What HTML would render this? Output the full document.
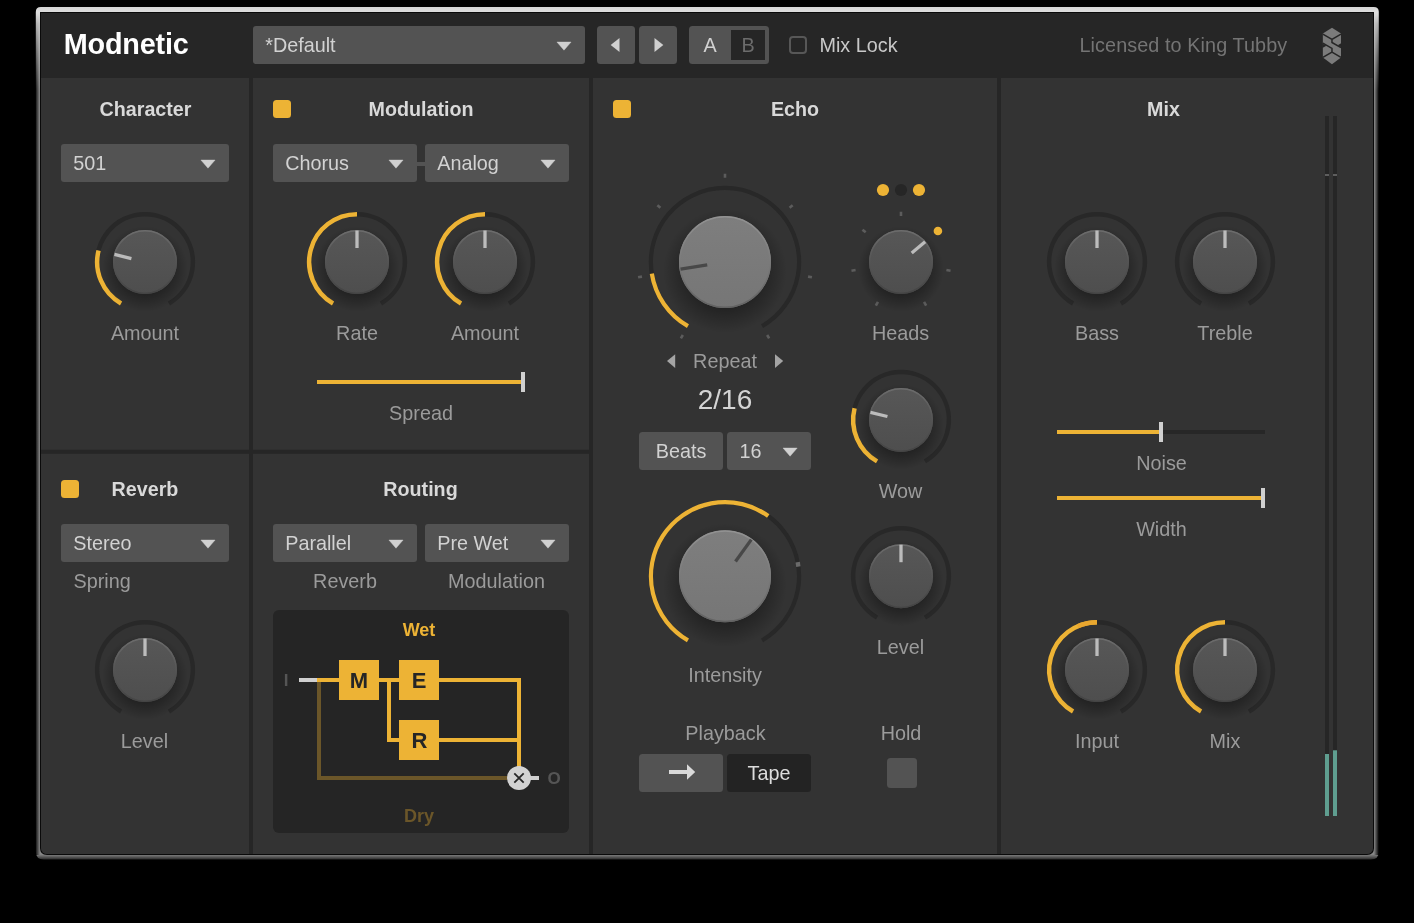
<!DOCTYPE html>
<html><head><meta charset="utf-8"><title>Modnetic</title>
<style>
html,body{margin:0;padding:0;background:#000;}
body{width:1414px;height:923px;position:relative;overflow:hidden;font-family:"Liberation Sans",sans-serif;}
#inner{position:absolute;left:41px;top:13px;width:1332px;height:841px;background:#262626;border-radius:0 0 6px 6px;overflow:hidden;}
svg{position:absolute;left:0;top:0;}
.t{position:absolute;white-space:nowrap;}
</style></head><body>
<svg width="1414" height="923" viewBox="0 0 1414 923">
<defs>
<linearGradient id="fv" x1="0" y1="7" x2="0" y2="859.5" gradientUnits="userSpaceOnUse">
<stop offset="0" stop-color="#d4d4d4"/><stop offset="0.006" stop-color="#dedede"/><stop offset="0.02" stop-color="#c4c4c4"/><stop offset="0.1" stop-color="#8e8e8e"/><stop offset="0.994" stop-color="#868686"/><stop offset="1" stop-color="#2a2a2a"/>
</linearGradient>
<linearGradient id="hl" x1="35" y1="0" x2="40" y2="0" gradientUnits="userSpaceOnUse"><stop offset="0" stop-color="#000" stop-opacity="1"/><stop offset="1" stop-color="#000" stop-opacity="0"/></linearGradient>
<linearGradient id="hr" x1="1379" y1="0" x2="1374" y2="0" gradientUnits="userSpaceOnUse"><stop offset="0" stop-color="#000" stop-opacity="1"/><stop offset="1" stop-color="#000" stop-opacity="0"/></linearGradient>
<linearGradient id="vf" x1="0" y1="14" x2="0" y2="90" gradientUnits="userSpaceOnUse"><stop offset="0" stop-color="#000"/><stop offset="1" stop-color="#fff"/></linearGradient>
<mask id="vm" maskUnits="userSpaceOnUse" x="0" y="0" width="1414" height="923"><rect x="0" y="0" width="1414" height="923" fill="url(#vf)"/></mask>
</defs>
<path d="M40.8 7H1373.8Q1378.8 7 1378.8 12V851.5Q1378.8 859.5 1370.8 859.5H43.8Q35.8 859.5 35.8 851.5V12Q35.8 7 40.8 7Z" fill="url(#fv)"/>
<rect x="35" y="12" width="5" height="843" fill="url(#hl)" mask="url(#vm)"/>
<rect x="1374" y="12" width="5.5" height="843" fill="url(#hr)" mask="url(#vm)"/>
<path d="M40 12H1374V848Q1374 855 1367 855H47Q40 855 40 848Z" fill="#0a0a0a"/>
</svg>
<div id="inner">
<svg width="1414" height="923" viewBox="41 13 1414 923" style="left:0;top:0">
<defs>
<linearGradient id="gs" x1="0" y1="0" x2="0" y2="1"><stop offset="0" stop-color="#575757"/><stop offset="1" stop-color="#4e4e4e"/></linearGradient>
<linearGradient id="gb" x1="0" y1="0" x2="0" y2="1"><stop offset="0" stop-color="#7e7e7e"/><stop offset="1" stop-color="#767676"/></linearGradient>
<linearGradient id="es" x1="0" y1="0" x2="0" y2="1"><stop offset="0" stop-color="#6c6c6c"/><stop offset="0.5" stop-color="#545454"/><stop offset="1" stop-color="#444444"/></linearGradient>
<linearGradient id="eb" x1="0" y1="0" x2="0" y2="1"><stop offset="0" stop-color="#929292"/><stop offset="0.5" stop-color="#7a7a7a"/><stop offset="1" stop-color="#626262"/></linearGradient>
<radialGradient id="ss"><stop offset="0.6" stop-color="#000" stop-opacity="0.32"/><stop offset="1" stop-color="#000" stop-opacity="0"/></radialGradient>
<radialGradient id="sb"><stop offset="0.6" stop-color="#000" stop-opacity="0.32"/><stop offset="1" stop-color="#000" stop-opacity="0"/></radialGradient>
</defs>
<rect x="40" y="12" width="1334" height="66" rx="0" fill="#262626"/>
<rect x="40" y="78" width="1334" height="776" rx="0" fill="#262626"/>
<rect x="41" y="78" width="208" height="371.75" rx="0" fill="#333333"/>
<rect x="253" y="78" width="336" height="371.75" rx="0" fill="#333333"/>
<rect x="41" y="453.75" width="208" height="400.25" rx="0" fill="#333333"/>
<rect x="253" y="453.75" width="336" height="400.25" rx="0" fill="#333333"/>
<rect x="593" y="78" width="404" height="776" rx="0" fill="#333333"/>
<rect x="1001" y="78" width="372" height="776" rx="0" fill="#333333"/>
<rect x="253" y="26" width="332" height="38" rx="3" fill="#535353"/>
<path d="M556.9 42.0L571.1 42.0L564 50.2Z" fill="#d0d0d0" stroke="#d0d0d0" stroke-width="0.4" stroke-linejoin="round"/>
<rect x="597" y="26" width="38" height="38" rx="3.5" fill="#535353"/>
<rect x="639" y="26" width="38" height="38" rx="3.5" fill="#535353"/>
<path d="M619.5 38L619.5 52L610.7 45Z" fill="#d0d0d0"/>
<path d="M654.5 38L654.5 52L663.3 45Z" fill="#d0d0d0"/>
<rect x="689" y="26" width="80" height="38" rx="3.5" fill="#535353"/>
<rect x="731" y="30" width="34" height="30" rx="0" fill="#262626"/>
<rect x="790" y="37" width="16" height="16" rx="3" fill="none" stroke="#575757" stroke-width="2"/>
<g transform="translate(1310,20) scale(0.05634)">
<path d="M390 138L550 240L550 665L390 785L228 665L228 240Z" fill="#7b7b7b"/>
<path d="M228 252L390 345L550 252M390 345L390 400L550 490M228 410L390 505L390 570M228 665L390 570L550 665" fill="none" stroke="#262626" stroke-width="27"/>
<path d="M560 408L492 447L560 486Z" fill="#262626"/>
<path d="M218 418L292 458L218 498Z" fill="#262626"/>
</g>
<rect x="61" y="144" width="168" height="38" rx="3" fill="#535353"/>
<path d="M200.9 160.0L215.1 160.0L208 168.2Z" fill="#d0d0d0" stroke="#d0d0d0" stroke-width="0.4" stroke-linejoin="round"/>
<path d="M121.08 303.44A47.85 47.85 0 1 1 168.93 303.44" fill="none" stroke="#282828" stroke-width="4.5"/>
<path d="M121.08 303.44A47.85 47.85 0 0 1 98.57 250.42" fill="none" stroke="#EDB335" stroke-width="4.5"/>
<circle cx="145" cy="269" r="43" fill="url(#ss)"/>
<circle cx="145" cy="262" r="32" fill="url(#gs)"/>
<circle cx="145" cy="262" r="31.25" fill="none" stroke="url(#es)" stroke-width="1.5"/>
<line x1="131.42" y1="258.61" x2="114.44" y2="254.38" stroke="#bcbcbc" stroke-width="3.3"/>
<rect x="273" y="100" width="18" height="18" rx="3.5" fill="#EDB335"/>
<rect x="415" y="162" width="12" height="4" rx="0" fill="#535353"/>
<rect x="273" y="144" width="144" height="38" rx="3" fill="#535353"/>
<path d="M388.9 160.0L403.1 160.0L396 168.2Z" fill="#d0d0d0" stroke="#d0d0d0" stroke-width="0.4" stroke-linejoin="round"/>
<rect x="425" y="144" width="144" height="38" rx="3" fill="#535353"/>
<path d="M540.9 160.0L555.1 160.0L548 168.2Z" fill="#d0d0d0" stroke="#d0d0d0" stroke-width="0.4" stroke-linejoin="round"/>
<path d="M333.07 303.44A47.85 47.85 0 1 1 380.93 303.44" fill="none" stroke="#282828" stroke-width="4.5"/>
<path d="M333.07 303.44A47.85 47.85 0 0 1 357.00 214.15" fill="none" stroke="#EDB335" stroke-width="4.5"/>
<circle cx="357" cy="269" r="43" fill="url(#ss)"/>
<circle cx="357" cy="262" r="32" fill="url(#gs)"/>
<circle cx="357" cy="262" r="31.25" fill="none" stroke="url(#es)" stroke-width="1.5"/>
<line x1="357.00" y1="248.00" x2="357.00" y2="230.50" stroke="#bcbcbc" stroke-width="3.3"/>
<path d="M461.07 303.44A47.85 47.85 0 1 1 508.93 303.44" fill="none" stroke="#282828" stroke-width="4.5"/>
<path d="M461.07 303.44A47.85 47.85 0 0 1 485.00 214.15" fill="none" stroke="#EDB335" stroke-width="4.5"/>
<circle cx="485" cy="269" r="43" fill="url(#ss)"/>
<circle cx="485" cy="262" r="32" fill="url(#gs)"/>
<circle cx="485" cy="262" r="31.25" fill="none" stroke="url(#es)" stroke-width="1.5"/>
<line x1="485.00" y1="248.00" x2="485.00" y2="230.50" stroke="#bcbcbc" stroke-width="3.3"/>
<rect x="317" y="380" width="208" height="4" rx="0" fill="#272727"/>
<rect x="317" y="380" width="206" height="4" rx="0" fill="#EDB335"/>
<rect x="521" y="372" width="4" height="20" rx="0" fill="#d0d0d0"/>
<rect x="61" y="480" width="18" height="18" rx="3.5" fill="#EDB335"/>
<rect x="61" y="524" width="168" height="38" rx="3" fill="#535353"/>
<path d="M200.9 540.0L215.1 540.0L208 548.2Z" fill="#d0d0d0" stroke="#d0d0d0" stroke-width="0.4" stroke-linejoin="round"/>
<path d="M121.08 711.44A47.85 47.85 0 1 1 168.93 711.44" fill="none" stroke="#282828" stroke-width="4.5"/>
<circle cx="145" cy="677" r="43" fill="url(#ss)"/>
<circle cx="145" cy="670" r="32" fill="url(#gs)"/>
<circle cx="145" cy="670" r="31.25" fill="none" stroke="url(#es)" stroke-width="1.5"/>
<line x1="145.00" y1="656.00" x2="145.00" y2="638.50" stroke="#bcbcbc" stroke-width="3.3"/>
<rect x="273" y="524" width="144" height="38" rx="3" fill="#535353"/>
<path d="M388.9 540.0L403.1 540.0L396 548.2Z" fill="#d0d0d0" stroke="#d0d0d0" stroke-width="0.4" stroke-linejoin="round"/>
<rect x="425" y="524" width="144" height="38" rx="3" fill="#535353"/>
<path d="M540.9 540.0L555.1 540.0L548 548.2Z" fill="#d0d0d0" stroke="#d0d0d0" stroke-width="0.4" stroke-linejoin="round"/>
<rect x="273" y="610" width="296" height="223" rx="6" fill="#252525"/>
<path d="M319 680L319 778L508 778" fill="none" stroke="#6b5629" stroke-width="4"/>
<path d="M317 680L519 680L519 768M389 680L389 740L519 740" fill="none" stroke="#EDB335" stroke-width="4"/>
<rect x="299" y="678" width="18" height="4" rx="0" fill="#d0d0d0"/>
<rect x="530" y="776" width="9" height="4" rx="0" fill="#d0d0d0"/>
<rect x="339" y="660" width="40" height="40" rx="0" fill="#EDB335"/>
<rect x="399" y="660" width="40" height="40" rx="0" fill="#EDB335"/>
<rect x="399" y="720" width="40" height="40" rx="0" fill="#EDB335"/>
<circle cx="519" cy="778" r="12" fill="#d2d2d2"/>
<path d="M514.3 773.3L523.7 782.7M523.7 773.3L514.3 782.7" stroke="#262626" stroke-width="1.8" fill="none"/>
<rect x="613" y="100" width="18" height="18" rx="3.5" fill="#EDB335"/>
<line x1="682.85" y1="335.01" x2="680.85" y2="338.47" stroke="#5c5c5c" stroke-width="2.6"/>
<line x1="641.98" y1="276.64" x2="638.04" y2="277.33" stroke="#5c5c5c" stroke-width="2.6"/>
<line x1="660.42" y1="207.81" x2="657.36" y2="205.24" stroke="#5c5c5c" stroke-width="2.6"/>
<line x1="725.00" y1="177.70" x2="725.00" y2="173.70" stroke="#5c5c5c" stroke-width="2.6"/>
<line x1="789.58" y1="207.81" x2="792.64" y2="205.24" stroke="#5c5c5c" stroke-width="2.6"/>
<line x1="808.02" y1="276.64" x2="811.96" y2="277.33" stroke="#5c5c5c" stroke-width="2.6"/>
<line x1="767.15" y1="335.01" x2="769.15" y2="338.47" stroke="#5c5c5c" stroke-width="2.6"/>
<path d="M687.95 326.17A74.1 74.1 0 1 1 762.05 326.17" fill="none" stroke="#282828" stroke-width="4.2"/>
<path d="M687.95 326.17A74.1 74.1 0 0 1 651.81 273.59" fill="none" stroke="#EDB335" stroke-width="4.2"/>
<circle cx="725" cy="271" r="62" fill="url(#sb)"/>
<circle cx="725" cy="262" r="46" fill="url(#gb)"/>
<circle cx="725" cy="262" r="45.25" fill="none" stroke="url(#eb)" stroke-width="1.5"/>
<line x1="707.22" y1="264.82" x2="680.55" y2="269.04" stroke="#484848" stroke-width="3.3"/>
<circle cx="883" cy="190" r="6.1" fill="#EDB335"/>
<circle cx="901" cy="190" r="6.1" fill="#262626"/>
<circle cx="919" cy="190" r="6.1" fill="#EDB335"/>
<line x1="877.95" y1="301.92" x2="875.85" y2="305.56" stroke="#5c5c5c" stroke-width="2.6"/>
<line x1="855.60" y1="270.01" x2="851.46" y2="270.73" stroke="#5c5c5c" stroke-width="2.6"/>
<line x1="865.69" y1="232.37" x2="862.47" y2="229.67" stroke="#5c5c5c" stroke-width="2.6"/>
<line x1="901.00" y1="215.90" x2="901.00" y2="211.70" stroke="#5c5c5c" stroke-width="2.6"/>
<line x1="946.40" y1="270.01" x2="950.54" y2="270.73" stroke="#5c5c5c" stroke-width="2.6"/>
<line x1="924.05" y1="301.92" x2="926.15" y2="305.56" stroke="#5c5c5c" stroke-width="2.6"/>
<circle cx="937.92" cy="231.02" r="4.3" fill="#EDB335"/>
<circle cx="901" cy="269" r="43" fill="url(#ss)"/>
<circle cx="901" cy="262" r="32" fill="url(#gs)"/>
<circle cx="901" cy="262" r="31.25" fill="none" stroke="url(#es)" stroke-width="1.5"/>
<line x1="911.72" y1="253.00" x2="925.13" y2="241.75" stroke="#bcbcbc" stroke-width="3.3"/>
<path d="M675.2 354.2L675.2 368L667 361.1Z" fill="#a4a4a4"/>
<path d="M775 354.2L775 368L783.2 361.1Z" fill="#a4a4a4"/>
<rect x="639" y="432" width="84" height="38" rx="3.5" fill="#535353"/>
<rect x="727" y="432" width="84" height="38" rx="3.5" fill="#535353"/>
<path d="M783.0 448.0L797.2 448.0L790.1 456.20000000000005Z" fill="#d0d0d0" stroke="#d0d0d0" stroke-width="0.4" stroke-linejoin="round"/>
<path d="M877.08 461.34A47.85 47.85 0 1 1 924.92 461.34" fill="none" stroke="#282828" stroke-width="4.5"/>
<path d="M877.08 461.34A47.85 47.85 0 0 1 854.57 408.32" fill="none" stroke="#EDB335" stroke-width="4.5"/>
<circle cx="901" cy="426.9" r="43" fill="url(#ss)"/>
<circle cx="901" cy="419.9" r="32" fill="url(#gs)"/>
<circle cx="901" cy="419.9" r="31.25" fill="none" stroke="url(#es)" stroke-width="1.5"/>
<line x1="887.42" y1="416.51" x2="870.44" y2="412.28" stroke="#bcbcbc" stroke-width="3.3"/>
<path d="M687.95 640.37A74.1 74.1 0 1 1 762.05 640.37" fill="none" stroke="#282828" stroke-width="4.2"/>
<path d="M687.95 640.37A74.1 74.1 0 1 1 768.24 516.02" fill="none" stroke="#EDB335" stroke-width="4.2"/>
<circle cx="725" cy="585.2" r="62" fill="url(#sb)"/>
<circle cx="725" cy="576.2" r="46" fill="url(#gb)"/>
<circle cx="725" cy="576.2" r="45.25" fill="none" stroke="url(#eb)" stroke-width="1.5"/>
<line x1="735.50" y1="561.58" x2="751.26" y2="539.66" stroke="#484848" stroke-width="3.3"/>
<rect x="795.85" y="562.17" width="4.4" height="4.4" fill="#6a6a6a" transform="rotate(81 798.05 564.37)"/>
<path d="M877.08 617.64A47.85 47.85 0 1 1 924.92 617.64" fill="none" stroke="#282828" stroke-width="4.5"/>
<circle cx="901" cy="583.2" r="43" fill="url(#ss)"/>
<circle cx="901" cy="576.2" r="32" fill="url(#gs)"/>
<circle cx="901" cy="576.2" r="31.25" fill="none" stroke="url(#es)" stroke-width="1.5"/>
<line x1="901.00" y1="562.20" x2="901.00" y2="544.70" stroke="#bcbcbc" stroke-width="3.3"/>
<rect x="639" y="754" width="84" height="38" rx="3.5" fill="#535353"/>
<rect x="727" y="754" width="84" height="38" rx="3.5" fill="#232323"/>
<path d="M669 770L687 770L687 764.2L695.2 772L687 779.8L687 774L669 774Z" fill="#dadada"/>
<rect x="887" y="758" width="30" height="30" rx="3.5" fill="#535353"/>
<path d="M1073.08 303.44A47.85 47.85 0 1 1 1120.92 303.44" fill="none" stroke="#282828" stroke-width="4.5"/>
<circle cx="1097" cy="269" r="43" fill="url(#ss)"/>
<circle cx="1097" cy="262" r="32" fill="url(#gs)"/>
<circle cx="1097" cy="262" r="31.25" fill="none" stroke="url(#es)" stroke-width="1.5"/>
<line x1="1097.00" y1="248.00" x2="1097.00" y2="230.50" stroke="#bcbcbc" stroke-width="3.3"/>
<path d="M1201.08 303.44A47.85 47.85 0 1 1 1248.92 303.44" fill="none" stroke="#282828" stroke-width="4.5"/>
<circle cx="1225" cy="269" r="43" fill="url(#ss)"/>
<circle cx="1225" cy="262" r="32" fill="url(#gs)"/>
<circle cx="1225" cy="262" r="31.25" fill="none" stroke="url(#es)" stroke-width="1.5"/>
<line x1="1225.00" y1="248.00" x2="1225.00" y2="230.50" stroke="#bcbcbc" stroke-width="3.3"/>
<rect x="1057" y="430" width="208" height="4" rx="0" fill="#272727"/>
<rect x="1057" y="430" width="104" height="4" rx="0" fill="#EDB335"/>
<rect x="1159" y="422" width="4" height="20" rx="0" fill="#d0d0d0"/>
<rect x="1057" y="496" width="208" height="4" rx="0" fill="#272727"/>
<rect x="1057" y="496" width="206" height="4" rx="0" fill="#EDB335"/>
<rect x="1261" y="488" width="4" height="20" rx="0" fill="#d0d0d0"/>
<path d="M1073.08 711.44A47.85 47.85 0 1 1 1120.92 711.44" fill="none" stroke="#282828" stroke-width="4.5"/>
<path d="M1073.08 711.44A47.85 47.85 0 0 1 1097.00 622.15" fill="none" stroke="#EDB335" stroke-width="4.5"/>
<circle cx="1097" cy="677" r="43" fill="url(#ss)"/>
<circle cx="1097" cy="670" r="32" fill="url(#gs)"/>
<circle cx="1097" cy="670" r="31.25" fill="none" stroke="url(#es)" stroke-width="1.5"/>
<line x1="1097.00" y1="656.00" x2="1097.00" y2="638.50" stroke="#bcbcbc" stroke-width="3.3"/>
<path d="M1077.54 626.29A47.85 47.85 0 0 1 1097.00 622.15" fill="none" stroke="#E9A72F" stroke-width="4.5"/>
<path d="M1201.08 711.44A47.85 47.85 0 1 1 1248.92 711.44" fill="none" stroke="#282828" stroke-width="4.5"/>
<path d="M1201.08 711.44A47.85 47.85 0 0 1 1225.00 622.15" fill="none" stroke="#EDB335" stroke-width="4.5"/>
<circle cx="1225" cy="677" r="43" fill="url(#ss)"/>
<circle cx="1225" cy="670" r="32" fill="url(#gs)"/>
<circle cx="1225" cy="670" r="31.25" fill="none" stroke="url(#es)" stroke-width="1.5"/>
<line x1="1225.00" y1="656.00" x2="1225.00" y2="638.50" stroke="#bcbcbc" stroke-width="3.3"/>
<rect x="1325" y="116" width="4" height="700" rx="0" fill="#262626"/>
<rect x="1333" y="116" width="4" height="700" rx="0" fill="#262626"/>
<rect x="1325" y="174" width="4" height="2" rx="0" fill="#5e5e5e"/>
<rect x="1333" y="174" width="4" height="2" rx="0" fill="#5e5e5e"/>
<rect x="1325" y="754" width="4" height="62" rx="0" fill="#5f9e90"/>
<rect x="1333" y="750.3" width="4" height="65.7" rx="0" fill="#5f9e90"/>
</svg>
<div style="position:absolute;left:-41px;top:-13px;will-change:transform;">
<div class="t" style="left:63.8px;top:24px;width:200px;height:40px;line-height:40px;font-size:28.8px;color:#ffffff;text-align:left;font-weight:bold;letter-spacing:-0.2px;">Modnetic</div>
<div class="t" style="left:265.2px;top:30px;width:332px;height:30px;line-height:30px;font-size:19.8px;color:#d2d2d2;text-align:left;">*Default</div>
<div class="t" style="left:690.0px;top:30px;width:40px;height:30px;line-height:30px;font-size:19.8px;color:#d2d2d2;text-align:center;">A</div>
<div class="t" style="left:728.0px;top:30px;width:40px;height:30px;line-height:30px;font-size:19.8px;color:#6c6c6c;text-align:center;">B</div>
<div class="t" style="left:819.5px;top:30px;width:200px;height:30px;line-height:30px;font-size:19.8px;color:#c8c8c8;text-align:left;">Mix Lock</div>
<div class="t" style="left:987.3px;top:30px;width:300px;height:30px;line-height:30px;font-size:19.8px;color:#747474;text-align:right;letter-spacing:0.1px;">Licensed to King Tubby</div>
<div class="t" style="left:-4.5px;top:94px;width:300px;height:30px;line-height:30px;font-size:19.7px;color:#d9d9d9;text-align:center;font-weight:bold;">Character</div>
<div class="t" style="left:73.2px;top:148px;width:168px;height:30px;line-height:30px;font-size:19.8px;color:#d2d2d2;text-align:left;">501</div>
<div class="t" style="left:-5.0px;top:318px;width:300px;height:30px;line-height:30px;font-size:19.8px;color:#9b9b9b;text-align:center;">Amount</div>
<div class="t" style="left:271.0px;top:94px;width:300px;height:30px;line-height:30px;font-size:19.7px;color:#d9d9d9;text-align:center;font-weight:bold;">Modulation</div>
<div class="t" style="left:285.2px;top:148px;width:144px;height:30px;line-height:30px;font-size:19.8px;color:#d2d2d2;text-align:left;">Chorus</div>
<div class="t" style="left:437.2px;top:148px;width:144px;height:30px;line-height:30px;font-size:19.8px;color:#d2d2d2;text-align:left;">Analog</div>
<div class="t" style="left:207.0px;top:318px;width:300px;height:30px;line-height:30px;font-size:19.8px;color:#9b9b9b;text-align:center;">Rate</div>
<div class="t" style="left:335.0px;top:318px;width:300px;height:30px;line-height:30px;font-size:19.8px;color:#9b9b9b;text-align:center;">Amount</div>
<div class="t" style="left:271.0px;top:398px;width:300px;height:30px;line-height:30px;font-size:19.8px;color:#9b9b9b;text-align:center;">Spread</div>
<div class="t" style="left:-5.0px;top:474px;width:300px;height:30px;line-height:30px;font-size:19.7px;color:#d9d9d9;text-align:center;font-weight:bold;">Reverb</div>
<div class="t" style="left:73.2px;top:528px;width:168px;height:30px;line-height:30px;font-size:19.8px;color:#d2d2d2;text-align:left;">Stereo</div>
<div class="t" style="left:73.5px;top:566px;width:300px;height:30px;line-height:30px;font-size:19.8px;color:#9b9b9b;text-align:left;">Spring</div>
<div class="t" style="left:-5.5px;top:726px;width:300px;height:30px;line-height:30px;font-size:19.8px;color:#9b9b9b;text-align:center;">Level</div>
<div class="t" style="left:270.5px;top:474px;width:300px;height:30px;line-height:30px;font-size:19.7px;color:#d9d9d9;text-align:center;font-weight:bold;">Routing</div>
<div class="t" style="left:285.2px;top:528px;width:144px;height:30px;line-height:30px;font-size:19.8px;color:#d2d2d2;text-align:left;">Parallel</div>
<div class="t" style="left:437.2px;top:528px;width:144px;height:30px;line-height:30px;font-size:19.8px;color:#d2d2d2;text-align:left;">Pre Wet</div>
<div class="t" style="left:195.0px;top:566px;width:300px;height:30px;line-height:30px;font-size:19.8px;color:#9b9b9b;text-align:center;">Reverb</div>
<div class="t" style="left:346.5px;top:566px;width:300px;height:30px;line-height:30px;font-size:19.8px;color:#9b9b9b;text-align:center;">Modulation</div>
<div class="t" style="left:269.0px;top:616px;width:300px;height:28px;line-height:28px;font-size:18px;color:#EDB335;text-align:center;font-weight:bold;">Wet</div>
<div class="t" style="left:269.0px;top:802px;width:300px;height:28px;line-height:28px;font-size:18px;color:#6b5629;text-align:center;font-weight:bold;">Dry</div>
<div class="t" style="left:339.0px;top:664px;width:40px;height:33px;line-height:33px;font-size:22px;color:#262626;text-align:center;font-weight:bold;">M</div>
<div class="t" style="left:399.0px;top:664px;width:40px;height:33px;line-height:33px;font-size:22px;color:#262626;text-align:center;font-weight:bold;">E</div>
<div class="t" style="left:399.5px;top:724px;width:40px;height:33px;line-height:33px;font-size:22px;color:#262626;text-align:center;font-weight:bold;">R</div>
<div class="t" style="left:276.0px;top:667px;width:20px;height:27px;line-height:27px;font-size:17px;color:#555555;text-align:center;font-weight:bold;">I</div>
<div class="t" style="left:544.0px;top:765px;width:20px;height:27px;line-height:27px;font-size:17px;color:#555555;text-align:center;font-weight:bold;">O</div>
<div class="t" style="left:645.0px;top:94px;width:300px;height:30px;line-height:30px;font-size:19.7px;color:#d9d9d9;text-align:center;font-weight:bold;">Echo</div>
<div class="t" style="left:750.5px;top:318px;width:300px;height:30px;line-height:30px;font-size:19.8px;color:#9b9b9b;text-align:center;">Heads</div>
<div class="t" style="left:575.0px;top:346px;width:300px;height:30px;line-height:30px;font-size:19.8px;color:#9b9b9b;text-align:center;">Repeat</div>
<div class="t" style="left:575.0px;top:380px;width:300px;height:39px;line-height:39px;font-size:28px;color:#d4d4d4;text-align:center;">2/16</div>
<div class="t" style="left:639.0px;top:436px;width:84px;height:30px;line-height:30px;font-size:19.8px;color:#d2d2d2;text-align:center;">Beats</div>
<div class="t" style="left:739.5px;top:436px;width:60px;height:30px;line-height:30px;font-size:19.8px;color:#d2d2d2;text-align:left;">16</div>
<div class="t" style="left:750.5px;top:476px;width:300px;height:30px;line-height:30px;font-size:19.8px;color:#9b9b9b;text-align:center;">Wow</div>
<div class="t" style="left:575.0px;top:660px;width:300px;height:30px;line-height:30px;font-size:19.8px;color:#9b9b9b;text-align:center;">Intensity</div>
<div class="t" style="left:750.5px;top:632px;width:300px;height:30px;line-height:30px;font-size:19.8px;color:#9b9b9b;text-align:center;">Level</div>
<div class="t" style="left:575.5px;top:718px;width:300px;height:30px;line-height:30px;font-size:19.8px;color:#9b9b9b;text-align:center;">Playback</div>
<div class="t" style="left:751.0px;top:718px;width:300px;height:30px;line-height:30px;font-size:19.8px;color:#9b9b9b;text-align:center;">Hold</div>
<div class="t" style="left:727.0px;top:758px;width:84px;height:30px;line-height:30px;font-size:19.8px;color:#dcdcdc;text-align:center;">Tape</div>
<div class="t" style="left:1013.5px;top:94px;width:300px;height:30px;line-height:30px;font-size:19.7px;color:#d9d9d9;text-align:center;font-weight:bold;">Mix</div>
<div class="t" style="left:947.0px;top:318px;width:300px;height:30px;line-height:30px;font-size:19.8px;color:#9b9b9b;text-align:center;">Bass</div>
<div class="t" style="left:1075.0px;top:318px;width:300px;height:30px;line-height:30px;font-size:19.8px;color:#9b9b9b;text-align:center;">Treble</div>
<div class="t" style="left:1011.5px;top:448px;width:300px;height:30px;line-height:30px;font-size:19.8px;color:#9b9b9b;text-align:center;">Noise</div>
<div class="t" style="left:1011.5px;top:514px;width:300px;height:30px;line-height:30px;font-size:19.8px;color:#9b9b9b;text-align:center;">Width</div>
<div class="t" style="left:947.0px;top:726px;width:300px;height:30px;line-height:30px;font-size:19.8px;color:#9b9b9b;text-align:center;">Input</div>
<div class="t" style="left:1075.0px;top:726px;width:300px;height:30px;line-height:30px;font-size:19.8px;color:#9b9b9b;text-align:center;">Mix</div>
</div>
</div>
</body></html>
